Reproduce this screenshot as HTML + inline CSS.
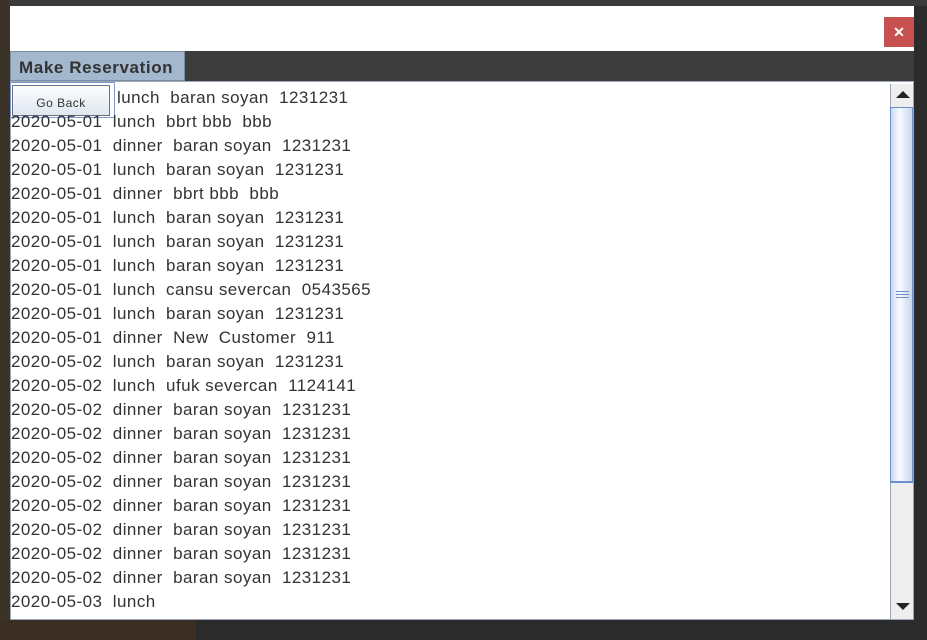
<!DOCTYPE html>
<html><head><style>
body{margin:0;width:927px;height:640px;overflow:hidden;background:#2b2b2b;position:relative;font-family:"Liberation Sans",sans-serif}
.abs{position:absolute}
.row{position:absolute;left:11px;font-size:17px;letter-spacing:0.45px;color:#333;white-space:pre;line-height:24px}
</style></head><body>
<div class="abs" style="left:0;top:0;width:927px;height:6px;background:#3a3a3a"></div>
<div class="abs" style="left:0;top:0;width:10px;height:640px;background:#3b3328"></div>
<div class="abs" style="left:196px;top:620px;width:731px;height:20px;background:#2b2b2b"></div>
<div class="abs" style="left:0;top:620px;width:196px;height:20px;background:#3a2f22"></div>
<div class="abs" style="left:10px;top:6px;width:904px;height:45px;background:#fff"></div>
<div class="abs" style="left:884px;top:17px;width:30px;height:30px;background:#c75050;color:#fff;font-weight:bold;font-size:14px;text-align:center;line-height:30px">✕</div>
<div class="abs" style="left:10px;top:51px;width:904px;height:30px;background:#3c3c3c"></div>
<div class="abs" style="left:10px;top:51px;width:175px;height:30px;background:#a3b8cc;border:1px solid #7a8da3;box-sizing:border-box;color:#333;font-weight:bold;font-size:17px;letter-spacing:0.6px;line-height:32px;padding-left:8px">Make Reservation</div>
<div class="abs" style="left:10px;top:81px;width:904px;height:539px;background:#fff;border:1px solid #9aa6b4;box-sizing:border-box"></div>
<div class="abs" style="left:10px;top:82px;width:105px;height:36px;border:1px solid #7a9ad0;box-sizing:border-box;background:#fff"></div>
<div class="abs" style="left:12px;top:85px;width:98px;height:31px;border:1px solid #6b7280;box-sizing:border-box;background:linear-gradient(#fbfcfd,#dfe8f2);font-size:12px;letter-spacing:0.5px;color:#333;text-align:center;line-height:34px">Go Back</div>
<div class="abs" style="left:890px;top:84px;width:23px;height:535px;background:#eeeeee;border-left:1px solid #9aa6b4;box-sizing:border-box"></div>
<div class="abs" style="left:896px;top:91px;width:0;height:0;border-left:7px solid transparent;border-right:7px solid transparent;border-bottom:7px solid #222"></div>
<div class="abs" style="left:896px;top:603px;width:0;height:0;border-left:7px solid transparent;border-right:7px solid transparent;border-top:7px solid #222"></div>
<div class="abs" style="left:890px;top:107px;width:23px;height:376px;border:1px solid #6b8fcc;border-bottom-width:2px;box-sizing:border-box;background:linear-gradient(90deg,#c9d8ee,#f8fbff 40%,#c9d8ee)"></div>
<div class="abs" style="left:896px;top:291px;width:13px;height:1px;background:#6b8fcc;box-shadow:0 3px #6b8fcc,0 6px #6b8fcc"></div>
<div class="row" style="top:86px;left:117px">lunch  baran soyan  1231231</div>
<div class="row" style="top:110px">2020-05-01  lunch  bbrt bbb  bbb</div>
<div class="row" style="top:134px">2020-05-01  dinner  baran soyan  1231231</div>
<div class="row" style="top:158px">2020-05-01  lunch  baran soyan  1231231</div>
<div class="row" style="top:182px">2020-05-01  dinner  bbrt bbb  bbb</div>
<div class="row" style="top:206px">2020-05-01  lunch  baran soyan  1231231</div>
<div class="row" style="top:230px">2020-05-01  lunch  baran soyan  1231231</div>
<div class="row" style="top:254px">2020-05-01  lunch  baran soyan  1231231</div>
<div class="row" style="top:278px">2020-05-01  lunch  cansu severcan  0543565</div>
<div class="row" style="top:302px">2020-05-01  lunch  baran soyan  1231231</div>
<div class="row" style="top:326px">2020-05-01  dinner  New  Customer  911</div>
<div class="row" style="top:350px">2020-05-02  lunch  baran soyan  1231231</div>
<div class="row" style="top:374px">2020-05-02  lunch  ufuk severcan  1124141</div>
<div class="row" style="top:398px">2020-05-02  dinner  baran soyan  1231231</div>
<div class="row" style="top:422px">2020-05-02  dinner  baran soyan  1231231</div>
<div class="row" style="top:446px">2020-05-02  dinner  baran soyan  1231231</div>
<div class="row" style="top:470px">2020-05-02  dinner  baran soyan  1231231</div>
<div class="row" style="top:494px">2020-05-02  dinner  baran soyan  1231231</div>
<div class="row" style="top:518px">2020-05-02  dinner  baran soyan  1231231</div>
<div class="row" style="top:542px">2020-05-02  dinner  baran soyan  1231231</div>
<div class="row" style="top:566px">2020-05-02  dinner  baran soyan  1231231</div>
<div class="row" style="top:590px">2020-05-03  lunch</div>
</body></html>
